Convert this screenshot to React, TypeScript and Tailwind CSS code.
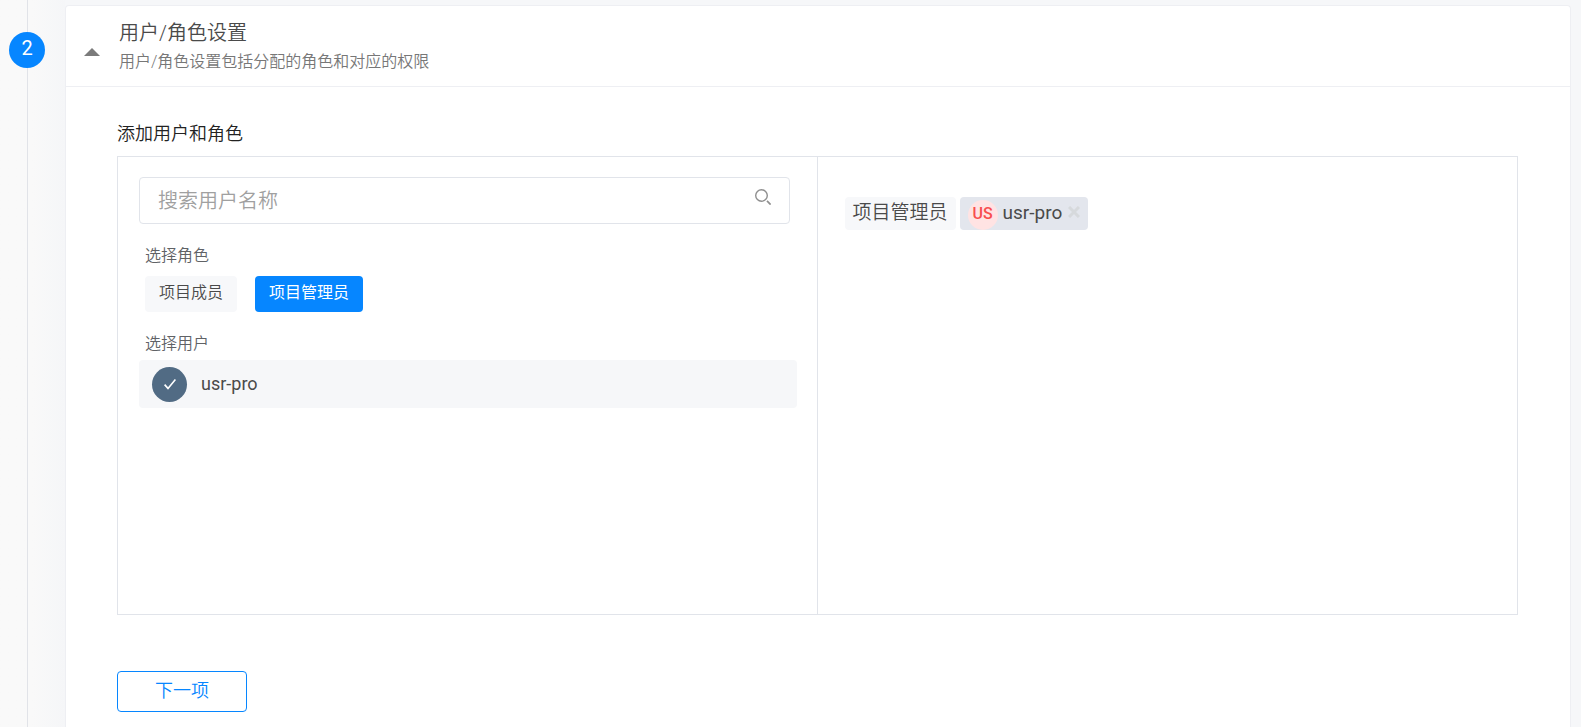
import { useState } from 'react';
import clsx from 'clsx';

const ROLES = ['项目成员', '项目管理员'];
const USERS = ['usr-pro'];

function SearchIcon() {
  return (
    <svg width="16" height="16" viewBox="0 0 16 16" fill="none" stroke="#8f8f8f" strokeWidth="1.4" aria-hidden="true">
      <circle cx="6.5" cy="6.5" r="5.8" />
      <path d="M12 11.8l3.6 3.8" strokeWidth="1.7" />
    </svg>
  );
}

function CheckIcon() {
  return (
    <svg width="12" height="12" viewBox="0 0 12 12" fill="none" stroke="#ffffff" strokeWidth="1.6" aria-hidden="true">
      <path d="M.6 6.6l3.4 3.8L11.4 1.4" />
    </svg>
  );
}

function CloseIcon() {
  return (
    <svg width="12" height="12" viewBox="0 0 12 12" fill="none" stroke="#d6d9dc" strokeWidth="3" aria-hidden="true">
      <path d="M1 1l10 10M11 1L1 11" />
    </svg>
  );
}

function StepRail() {
  return (
    <div className="relative flex w-[65px] shrink-0 bg-linear-to-r from-[#f9f9f9] from-50% to-[#f5f6f8] pt-8 pl-[9px]">
      <div className="absolute inset-y-0 left-[27px] w-px bg-[#e1e3e8]" />
      <span className="relative flex size-9 items-center justify-center rounded-full bg-[#0686ff] pb-1 text-[20px] leading-6 text-white">
        2
      </span>
    </div>
  );
}

export default function App() {
  const [open, setOpen] = useState(true);
  const [role, setRole] = useState('项目管理员');
  const [query, setQuery] = useState('');
  const [picked, setPicked] = useState<string[]>(['usr-pro']);

  const toggle = (user: string) =>
    setPicked((list) => (list.includes(user) ? list.filter((u) => u !== user) : [...list, user]));

  return (
    <div className="flex min-h-screen bg-[#f6f7f9] font-['Roboto','Noto_Sans_CJK_SC',sans-serif] font-normal text-[#4a4a4a]">
      <StepRail />

      <main className="mt-[5px] mr-[10px] min-w-0 flex-1 rounded-t border border-b-0 border-[#eeeff3] bg-white">
        <header className="flex h-[81px] items-center gap-[19px] border-b border-[#eeeff3] pl-[18px]">
          <button type="button" aria-label="展开或收起" aria-expanded={open} onClick={() => setOpen(!open)} className="mt-3">
            <svg width="16" height="8" viewBox="0 0 16 8" className={clsx(!open && 'rotate-180')} aria-hidden="true">
              <path d="M0 8L8 0l8 8z" fill="#7b7b7b" />
            </svg>
          </button>
          <div>
            <h2 className="text-[20px] leading-8 font-[350]">用户/角色设置</h2>
            <p className="text-[16px] leading-[26px] font-[350] text-[#777777]">用户/角色设置包括分配的角色和对应的权限</p>
          </div>
        </header>

        {open && (
          <div className="pt-[33px] pr-[52px] pb-3 pl-[51px]">
            <h3 className="text-[18px] leading-7 font-[350] text-[#222222]">添加用户和角色</h3>

            <div className="mt-2 grid min-h-[459px] grid-cols-2 border border-[#e1e4ea]">
              <div className="border-r border-[#e1e4ea] pt-5 pr-5 pl-[21px]">
                <label className="mr-[7px] flex h-[47px] items-center rounded-sm border border-[#e1e4ea] pr-[18px] pl-[18px]">
                  <input
                    type="text"
                    aria-label="搜索用户名称"
                    placeholder="搜索用户名称"
                    value={query}
                    onChange={(e) => setQuery(e.target.value)}
                    className="min-w-0 flex-1 text-[20px] leading-8 font-[350] outline-none placeholder:text-[#a0a0a0]"
                  />
                  <span className="pb-2">
                    <SearchIcon />
                  </span>
                </label>

                <p className="mt-5 pl-[6px] text-[16px] leading-6 font-[350] text-[#606266]">选择角色</p>
                <div className="mt-2 flex gap-[18px] pl-[6px]">
                  {ROLES.map((name) => (
                    <button
                      key={name}
                      type="button"
                      onClick={() => setRole(name)}
                      className={clsx(
                        'h-9 rounded px-[14px] pb-[2px] text-[16px] leading-6',
                        name === role ? 'bg-[#0686ff] text-white' : 'bg-[#f7f8fa] font-[350] text-[#4a4a4a]',
                      )}
                    >
                      {name}
                    </button>
                  ))}
                </div>

                <p className="mt-5 pl-[6px] text-[16px] leading-6 font-[350] text-[#606266]">选择用户</p>
                <ul className="mt-1">
                  {USERS.filter((user) => user.includes(query)).map((user) => (
                    <li key={user}>
                      <button
                        type="button"
                        aria-pressed={picked.includes(user)}
                        onClick={() => toggle(user)}
                        className="flex h-12 w-full items-center gap-[14px] rounded bg-[#f6f7f9] pl-[13px] text-[18px] leading-6"
                      >
                        <span className="flex size-[35px] items-center justify-center rounded-full bg-[#516b84]">
                          {picked.includes(user) && <CheckIcon />}
                        </span>
                        {user}
                      </button>
                    </li>
                  ))}
                </ul>
              </div>

              <div className="flex items-start gap-1 pt-10 pl-[27px]">
                <span className="h-[33px] rounded bg-[#f7f8fa] px-2 text-[19px] leading-8 font-[350]">{role}</span>
                {picked.map((user) => (
                  <span key={user} className="flex h-[33px] items-center rounded bg-[#e3e6ed] px-2 text-[19px] leading-8">
                    <span className="mt-[3px] mr-[5px] flex size-[30px] items-center justify-center rounded-full bg-[#ffe3e3] pb-[2px] text-[16px] leading-6 font-medium text-[#f84e4e]">
                      {user.slice(0, 2).toUpperCase()}
                    </span>
                    <span className="pb-[2px]">{user}</span>
                    <button type="button" aria-label={`移除 ${user}`} onClick={() => toggle(user)} className="ml-[6px] pb-1">
                      <CloseIcon />
                    </button>
                  </span>
                ))}
              </div>
            </div>

            <button
              type="button"
              className="mt-14 h-[41px] w-[130px] rounded border border-[#0686ff] pb-[2px] text-[18px] leading-7 font-[350] text-[#0686ff]"
            >
              下一项
            </button>
          </div>
        )}
      </main>
    </div>
  );
}
